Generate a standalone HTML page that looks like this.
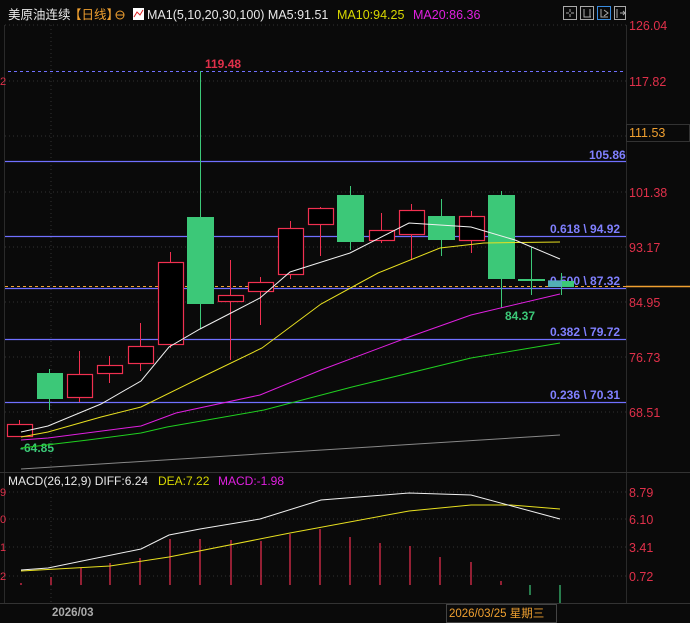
<!DOCTYPE html>
<html><head><meta charset="utf-8"><style>
html,body{margin:0;padding:0;background:#0a0a0a;width:690px;height:623px;overflow:hidden}
svg{display:block}
text{font-family:"Liberation Sans","Noto Sans CJK SC",sans-serif}
</style></head><body>
<svg width="690" height="623" viewBox="0 0 690 623" xmlns="http://www.w3.org/2000/svg">
<rect width="690" height="623" fill="#0a0a0a"/>
<!-- grid -->
<g stroke="#333" stroke-dasharray="1,3" stroke-width="1">
<line x1="5" y1="25" x2="626" y2="25"/><line x1="5" y1="81" x2="626" y2="81"/>
<line x1="5" y1="136" x2="626" y2="136"/><line x1="5" y1="192" x2="626" y2="192"/>
<line x1="5" y1="247" x2="626" y2="247"/><line x1="5" y1="302" x2="626" y2="302"/>
<line x1="5" y1="357" x2="626" y2="357"/><line x1="5" y1="412" x2="626" y2="412"/>
<line x1="5" y1="492" x2="626" y2="492"/><line x1="5" y1="519" x2="626" y2="519"/>
<line x1="5" y1="547" x2="626" y2="547"/><line x1="5" y1="576" x2="626" y2="576"/>
<line x1="51" y1="25" x2="51" y2="603"/>
</g>
<line x1="626.5" y1="25" x2="626.5" y2="603" stroke="#2a2a2a"/>
<line x1="4.5" y1="25" x2="4.5" y2="603" stroke="#2a2a2a"/>
<line x1="0" y1="472.5" x2="690" y2="472.5" stroke="#333"/>
<line x1="0" y1="603.5" x2="690" y2="603.5" stroke="#333"/>
<!-- header -->
<text x="8" y="19" font-size="12.5" fill="#e8e8e8">美原油连续</text>
<text x="69" y="19" font-size="12.5" fill="#f0a030">【日线】</text>
<circle cx="120" cy="15" r="4" fill="none" stroke="#f0a030"/><line x1="116" y1="15" x2="124" y2="15" stroke="#f0a030"/>
<rect x="133" y="8" width="11" height="12" fill="#fff"/><polyline points="134,17 137,12 140,15 143,10" fill="none" stroke="#d22" stroke-width="1"/>
<text x="147" y="19" font-size="12.5" fill="#e8e8e8">MA1(5,10,20,30,100)  MA5:91.51</text>
<text x="337" y="19" font-size="12.5" fill="#d8d800">MA10:94.25</text>
<text x="413" y="19" font-size="12.5" fill="#e020e0">MA20:86.36</text>
<g fill="none" stroke="#aaa">
<rect x="563.5" y="6.5" width="13" height="13"/><rect x="580.5" y="6.5" width="13" height="13"/>
<rect x="597.5" y="6.5" width="13" height="13" stroke="#3a8de0"/><rect x="614.5" y="6.5" width="11" height="13"/>
<path d="M570 9v3M570 14v3M566 13h3M571 13h3M584 9v8h7M590 9v8M601 9v8h7M604 10l4 3-4 3M617 9v9M620 13h5l-2-2M625 13l-2 2"/>
</g>
<!-- right axis labels -->
<g font-size="12.5" fill="#e0304a">
<text x="629" y="30">126.04</text><text x="629" y="86">117.82</text>
<text x="629" y="197">101.38</text><text x="629" y="252">93.17</text>
<text x="629" y="307">84.95</text><text x="629" y="362">76.73</text><text x="629" y="417">68.51</text>
<text x="629" y="497">8.79</text><text x="629" y="524">6.10</text><text x="629" y="552">3.41</text><text x="629" y="581">0.72</text>
</g>
<rect x="626.5" y="124.5" width="63" height="17" fill="#0a0a0a" stroke="#333"/>
<text x="629" y="137" font-size="12.5" fill="#f0a030">111.53</text>
<!-- fib lines -->
<g stroke="#7070ff" stroke-width="1.2">
<line x1="5" y1="161.5" x2="626" y2="161.5"/><line x1="5" y1="236.5" x2="626" y2="236.5"/>
<line x1="5" y1="288.5" x2="626" y2="288.5"/><line x1="5" y1="339.5" x2="626" y2="339.5"/>
<line x1="5" y1="402.5" x2="626" y2="402.5"/>
</g>
<line x1="8" y1="71.5" x2="626" y2="71.5" stroke="#7070ff" stroke-dasharray="3,3"/>
<line x1="5" y1="286.5" x2="626" y2="286.5" stroke="#f0a030" stroke-dasharray="3,3"/>
<line x1="626" y1="286.5" x2="690" y2="286.5" stroke="#f0a030" stroke-width="1.5"/>
<g font-size="12" font-weight="bold" fill="#8080ff">
<text x="589" y="159">105.86</text><text x="550" y="233">0.618 \ 94.92</text>
<text x="550" y="285">0.500 \ 87.32</text><text x="550" y="336">0.382 \ 79.72</text>
<text x="550" y="399">0.236 \ 70.31</text>
</g>
<text x="205" y="68" font-size="12" font-weight="bold" fill="#e0304a">119.48</text>
<text x="505" y="320" font-size="12" font-weight="bold" fill="#3cc878">84.37</text>
<text x="20" y="452" font-size="12" font-weight="bold" fill="#3cc878">-64.85</text>
<text x="0" y="85" font-size="11" fill="#e0304a">2</text>
<!-- candles: wicks -->
<g stroke="#f03050" stroke-width="1">
<line x1="19.5" y1="420" x2="19.5" y2="424"/>
<line x1="79.5" y1="351" x2="79.5" y2="402"/><line x1="109.5" y1="356" x2="109.5" y2="383"/>
<line x1="140.5" y1="323" x2="140.5" y2="371"/><line x1="170.5" y1="252" x2="170.5" y2="348"/>
<line x1="230.5" y1="260" x2="230.5" y2="360"/><line x1="260.5" y1="277" x2="260.5" y2="325"/>
<line x1="290.5" y1="221" x2="290.5" y2="279"/><line x1="320.5" y1="207" x2="320.5" y2="256"/>
<line x1="381.5" y1="213" x2="381.5" y2="243"/><line x1="411.5" y1="204" x2="411.5" y2="260"/>
<line x1="471.5" y1="211" x2="471.5" y2="253"/>
</g>
<g stroke="#3cc878" stroke-width="1">
<line x1="49.5" y1="369" x2="49.5" y2="410"/><line x1="200.5" y1="71" x2="200.5" y2="329"/>
<line x1="350.5" y1="186" x2="350.5" y2="250"/><line x1="441.5" y1="199" x2="441.5" y2="256"/>
<line x1="501.5" y1="191" x2="501.5" y2="308"/><line x1="531.5" y1="247" x2="531.5" y2="295"/>
<line x1="561.5" y1="273" x2="561.5" y2="295"/>
</g>
<g fill="#000" stroke="#f03050" stroke-width="1.2">
<rect x="7.5" y="424.5" width="25" height="12"/><rect x="67.5" y="374.5" width="25" height="23"/>
<rect x="97.5" y="365.5" width="25" height="8"/><rect x="128.5" y="346.5" width="25" height="17"/>
<rect x="158.5" y="262.5" width="25" height="82"/><rect x="218.5" y="295.5" width="25" height="6"/>
<rect x="248.5" y="282.5" width="25" height="9"/><rect x="278.5" y="228.5" width="25" height="46"/>
<rect x="308.5" y="208.5" width="25" height="16"/><rect x="369.5" y="230.5" width="25" height="10"/>
<rect x="399.5" y="210.5" width="25" height="24"/><rect x="459.5" y="216.5" width="25" height="24"/>
</g>
<g fill="#3cc878">
<rect x="37" y="373" width="26" height="26"/><rect x="187" y="217" width="27" height="87"/>
<rect x="337" y="195" width="27" height="47"/><rect x="428" y="216" width="27" height="24"/>
<rect x="488" y="195" width="27" height="84"/><rect x="518" y="279" width="27" height="2"/>
<rect x="548" y="281" width="26" height="6"/>
</g>
<rect x="548" y="280" width="14" height="7" fill="#60a0e0" opacity="0.6"/>
<!-- MAs -->
<g fill="none" stroke-width="1">
<polyline stroke="#888" points="21,469 560,435"/>
<polyline stroke="#20d020" points="21,448 88,440 141,433 167,427 264,410 352,387 471,358 560,343"/>
<polyline stroke="#e020e0" points="21,440 48,438 141,426 176,413 260,395 321,370 409,337 471,315 560,294"/>
<polyline stroke="#e8e020" points="21,437 48,432 101,417 141,407 202,377 262,348 321,304 378,273 440,248 484,243 560,242"/>
<polyline stroke="#f0f0f0" points="21,432 48,426 101,404 141,381 169,347 200,329 231,313 260,298 290,272 350,253 409,223 471,227 515,240 560,259"/>
</g>
<!-- MACD -->
<text x="8" y="485" font-size="12" fill="#e8e8e8">MACD(26,12,9) DIFF:6.24</text>
<text x="158" y="485" font-size="12" fill="#d8d800">DEA:7.22</text>
<text x="218" y="485" font-size="12" fill="#e020e0">MACD:-1.98</text>
<g stroke="#f03050" stroke-width="1.2">
<line x1="21" y1="583" x2="21" y2="585"/><line x1="51" y1="577" x2="51" y2="585"/>
<line x1="81" y1="568" x2="81" y2="585"/><line x1="110" y1="563" x2="110" y2="585"/>
<line x1="140" y1="558" x2="140" y2="585"/><line x1="170" y1="539" x2="170" y2="585"/>
<line x1="200" y1="539" x2="200" y2="585"/><line x1="231" y1="540" x2="231" y2="585"/>
<line x1="261" y1="541" x2="261" y2="585"/><line x1="290" y1="534" x2="290" y2="585"/>
<line x1="320" y1="529" x2="320" y2="585"/><line x1="350" y1="537" x2="350" y2="585"/>
<line x1="380" y1="543" x2="380" y2="585"/><line x1="410" y1="546" x2="410" y2="585"/>
<line x1="440" y1="557" x2="440" y2="585"/><line x1="471" y1="562" x2="471" y2="585"/>
<line x1="501" y1="581" x2="501" y2="585"/>
</g>
<g stroke="#3cc878" stroke-width="1.2">
<line x1="530" y1="585" x2="530" y2="595"/><line x1="560" y1="585" x2="560" y2="603"/>
</g>
<polyline fill="none" stroke="#e8e020" points="21,571 110,566 169,557 290,533 409,511 471,505 511,505 560,509"/>
<polyline fill="none" stroke="#f0f0f0" points="21,570 48,568 141,549 169,535 200,529 260,519 321,500 409,493 471,495 560,519"/>
<text x="0" y="496" font-size="11" fill="#e0304a">9</text>
<text x="0" y="523" font-size="11" fill="#e0304a">0</text>
<text x="0" y="551" font-size="11" fill="#e0304a">1</text>
<text x="0" y="580" font-size="11" fill="#e0304a">2</text>
<!-- dates -->
<text x="52" y="616" font-size="11.5" font-weight="bold" fill="#aaa">2026/03</text>
<rect x="446.5" y="604.5" width="110" height="18" fill="none" stroke="#444"/>
<text x="449" y="617" font-size="11.5" fill="#f0a030">2026/03/25 星期三</text>
</svg>
</body></html>
